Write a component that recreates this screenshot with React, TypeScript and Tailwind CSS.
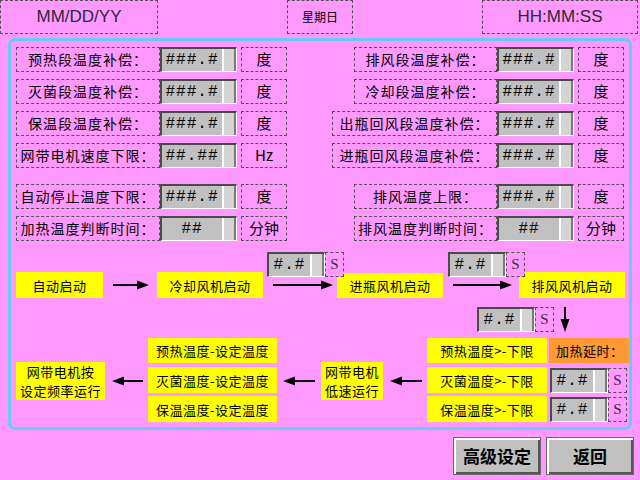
import React from 'react';

const cjk = "font-['Noto_Sans_CJK_SC',sans-serif]";

type RowProps = { label: string; value: string; unit: string; labelW: string };

const Field = ({ value, w }: { value: string; w: string }) => (
  <div className={`flex h-[25px] ${w} border-t-2 border-l-2 border-t-[#4a4a4a] border-l-[#4a4a4a] border-b border-r border-b-white border-r-white bg-[#c0c0c0]`}>
    <div className="flex flex-1 items-center justify-center font-['Liberation_Mono',monospace] text-[16px] leading-none tracking-[1px] text-black">
      {value}
    </div>
    <div className="w-[14px] border-l-2 border-l-white border-r-2 border-r-[#7a7a7a] bg-[#d4d4d4]" />
  </div>
);

const SetRow = ({ label, value, unit, labelW }: RowProps) => (
  <div className="flex h-[25px] items-stretch">
    <div className={`flex ${labelW} items-center justify-center border border-dashed border-[#555] ${cjk} text-[14px] tracking-[1px] text-black`}>
      {label}
    </div>
    <Field value={value} w="w-[77px]" />
    <div className={`ml-[4px] flex w-[46px] items-center justify-center border border-dashed border-[#555] ${cjk} text-[15px] text-black`}>
      {unit}
    </div>
  </div>
);

const TimeBox = ({ x, y }: { x: string; y: string }) => (
  <div className={`absolute z-10 flex ${x} ${y}`}>
    <Field value="#.#" w="w-[58px]" />
    <div className="flex h-[25px] w-[19px] items-center justify-center border border-dashed border-[#555] bg-[#ff99ff] font-['Liberation_Serif',serif] text-[15px] text-[#333]">
      S
    </div>
  </div>
);

const Node = ({ pos, children, color = 'bg-[#ffff00]' }: { pos: string; children: React.ReactNode; color?: string }) => (
  <div className={`absolute flex items-center justify-center ${color} ${pos} ${cjk} text-center text-[13px] leading-[19px] tracking-[0.5px] text-black`}>
    {children}
  </div>
);

const ArrowR = ({ pos, w }: { pos: string; w: number }) => (
  <svg className={`absolute ${pos}`} width={w} height={10} viewBox={`0 0 ${w} 10`}>
    <line x1={0} y1={5} x2={w - 10} y2={5} stroke="black" strokeWidth={2} />
    <polygon points={`${w - 12},0.5 ${w},5 ${w - 12},9.5`} fill="black" />
  </svg>
);

const ArrowL = ({ pos, w }: { pos: string; w: number }) => (
  <svg className={`absolute ${pos}`} width={w} height={10} viewBox={`0 0 ${w} 10`}>
    <line x1={10} y1={5} x2={w} y2={5} stroke="black" strokeWidth={2} />
    <polygon points={`12,0.5 0,5 12,9.5`} fill="black" />
  </svg>
);

const leftRows: RowProps[] = [
  { label: '预热段温度补偿：', value: '###.#', unit: '度', labelW: 'w-[144px]' },
  { label: '灭菌段温度补偿：', value: '###.#', unit: '度', labelW: 'w-[144px]' },
  { label: '保温段温度补偿：', value: '###.#', unit: '度', labelW: 'w-[144px]' },
  { label: '网带电机速度下限：', value: '##.##', unit: 'Hz', labelW: 'w-[144px]' },
  { label: '自动停止温度下限：', value: '###.#', unit: '度', labelW: 'w-[144px]' },
  { label: '加热温度判断时间：', value: '##', unit: '分钟', labelW: 'w-[144px]' },
];

const rightRows: RowProps[] = [
  { label: '排风段温度补偿：', value: '###.#', unit: '度', labelW: 'w-[143px]' },
  { label: '冷却段温度补偿：', value: '###.#', unit: '度', labelW: 'w-[143px]' },
  { label: '出瓶回风段温度补偿：', value: '###.#', unit: '度', labelW: 'w-[165px]' },
  { label: '进瓶回风段温度补偿：', value: '###.#', unit: '度', labelW: 'w-[165px]' },
  { label: '排风温度上限：', value: '###.#', unit: '度', labelW: 'w-[143px]' },
  { label: '排风温度判断时间：', value: '##', unit: '分钟', labelW: 'w-[143px]' },
];

const TopBox = ({ w, children, cls }: { w: string; children: React.ReactNode; cls: string }) => (
  <div className={`flex h-[34px] ${w} items-center justify-center border border-dashed border-[#555] ${cls}`}>{children}</div>
);

export default function App() {
  return (
    <div className="h-[480px] w-[640px] overflow-hidden bg-[#ff99ff]">
      <div className="flex">
        <TopBox w="w-[158px]" cls="font-['Liberation_Sans',sans-serif] text-[17px] text-[#2a2a3a]">MM/DD/YY</TopBox>
        <TopBox w="w-[66px] ml-[129px]" cls={`${cjk} text-[12px] text-black`}>星期日</TopBox>
        <TopBox w="w-[156px] ml-auto mr-[2px]" cls="font-['Liberation_Sans',sans-serif] text-[17px] text-[#2a2a3a]">HH:MM:SS</TopBox>
      </div>

      <div className="mx-[8px] mt-[4px] h-[392px] w-[624px] rounded-[7px] border-[3px] border-[#66ccf5] px-[5px] pt-[6px]">
        <div className="flex flex-col gap-[7px]">
          {leftRows.map((l, i) => (
            <div key={i} className={`flex justify-between ${i === 4 ? 'mt-[9px]' : ''}`}>
              <SetRow {...l} />
              <SetRow {...rightRows[i]} />
            </div>
          ))}
        </div>

        <div className="relative mt-[4px] h-[180px]">
          <Node pos="left-[0px] top-[27px] w-[87px] h-[26px]">自动启动</Node>
          <ArrowR pos="left-[97px] top-[35px]" w={36} />
          <Node pos="left-[141px] top-[27px] w-[106px] h-[26px]">冷却风机启动</Node>
          <TimeBox x="left-[251px]" y="top-[7px]" />
          <ArrowR pos="left-[257px] top-[35px]" w={60} />
          <Node pos="left-[321px] top-[28px] w-[106px] h-[25px]">进瓶风机启动</Node>
          <TimeBox x="left-[432px]" y="top-[7px]" />
          <ArrowR pos="left-[437px] top-[35px]" w={59} />
          <Node pos="left-[503px] top-[27px] w-[106px] h-[26px]">排风风机启动</Node>
          <TimeBox x="left-[461px]" y="top-[62px]" />
          <svg className="absolute left-[544px] top-[62px]" width={10} height={25} viewBox="0 0 10 25">
            <line x1={5} y1={0} x2={5} y2={14} stroke="black" strokeWidth={2} />
            <polygon points="0.5,12 9.5,12 5,25" fill="black" />
          </svg>

          <Node pos="left-[0px] top-[117px] w-[89px] h-[38px]">
            网带电机按
            <br />
            设定频率运行
          </Node>
          <ArrowL pos="left-[96px] top-[131px]" w={31} />
          <Node pos="left-[132px] top-[93px] w-[129px] h-[25px]">预热温度-设定温度</Node>
          <Node pos="left-[132px] top-[122px] w-[129px] h-[26px]">灭菌温度-设定温度</Node>
          <Node pos="left-[132px] top-[151px] w-[129px] h-[26px]">保温温度-设定温度</Node>
          <ArrowL pos="left-[267px] top-[131px]" w={32} />
          <Node pos="left-[305px] top-[117px] w-[62px] h-[38px]">
            网带电机
            <br />
            低速运行
          </Node>
          <ArrowL pos="left-[374px] top-[131px]" w={32} />
          <Node pos="left-[411px] top-[93px] w-[120px] h-[25px]">预热温度&gt;-下限</Node>
          <Node pos="left-[411px] top-[122px] w-[120px] h-[26px]">灭菌温度&gt;-下限</Node>
          <Node pos="left-[411px] top-[151px] w-[120px] h-[26px]">保温温度&gt;-下限</Node>
          <Node pos="left-[533px] top-[93px] w-[80px] h-[25px] !justify-start pl-[7px]" color="bg-[#ff9933]">
            加热延时：
          </Node>
          <TimeBox x="left-[534px]" y="top-[123px]" />
          <TimeBox x="left-[534px]" y="top-[152px]" />
        </div>
      </div>

      <div className="mt-[7px] flex justify-end gap-[5px] pr-[6px]">
        {['高级设定', '返回'].map((t) => (
          <div
            key={t}
            className={`flex h-[38px] w-[88px] items-center justify-center border border-[#6a6a6a] bg-[#c0c0c0] shadow-[inset_2px_2px_0_#ffffff,inset_-2px_-2px_0_#555555] ${cjk} text-[17px] font-bold text-black`}
          >
            {t}
          </div>
        ))}
      </div>
    </div>
  );
}
